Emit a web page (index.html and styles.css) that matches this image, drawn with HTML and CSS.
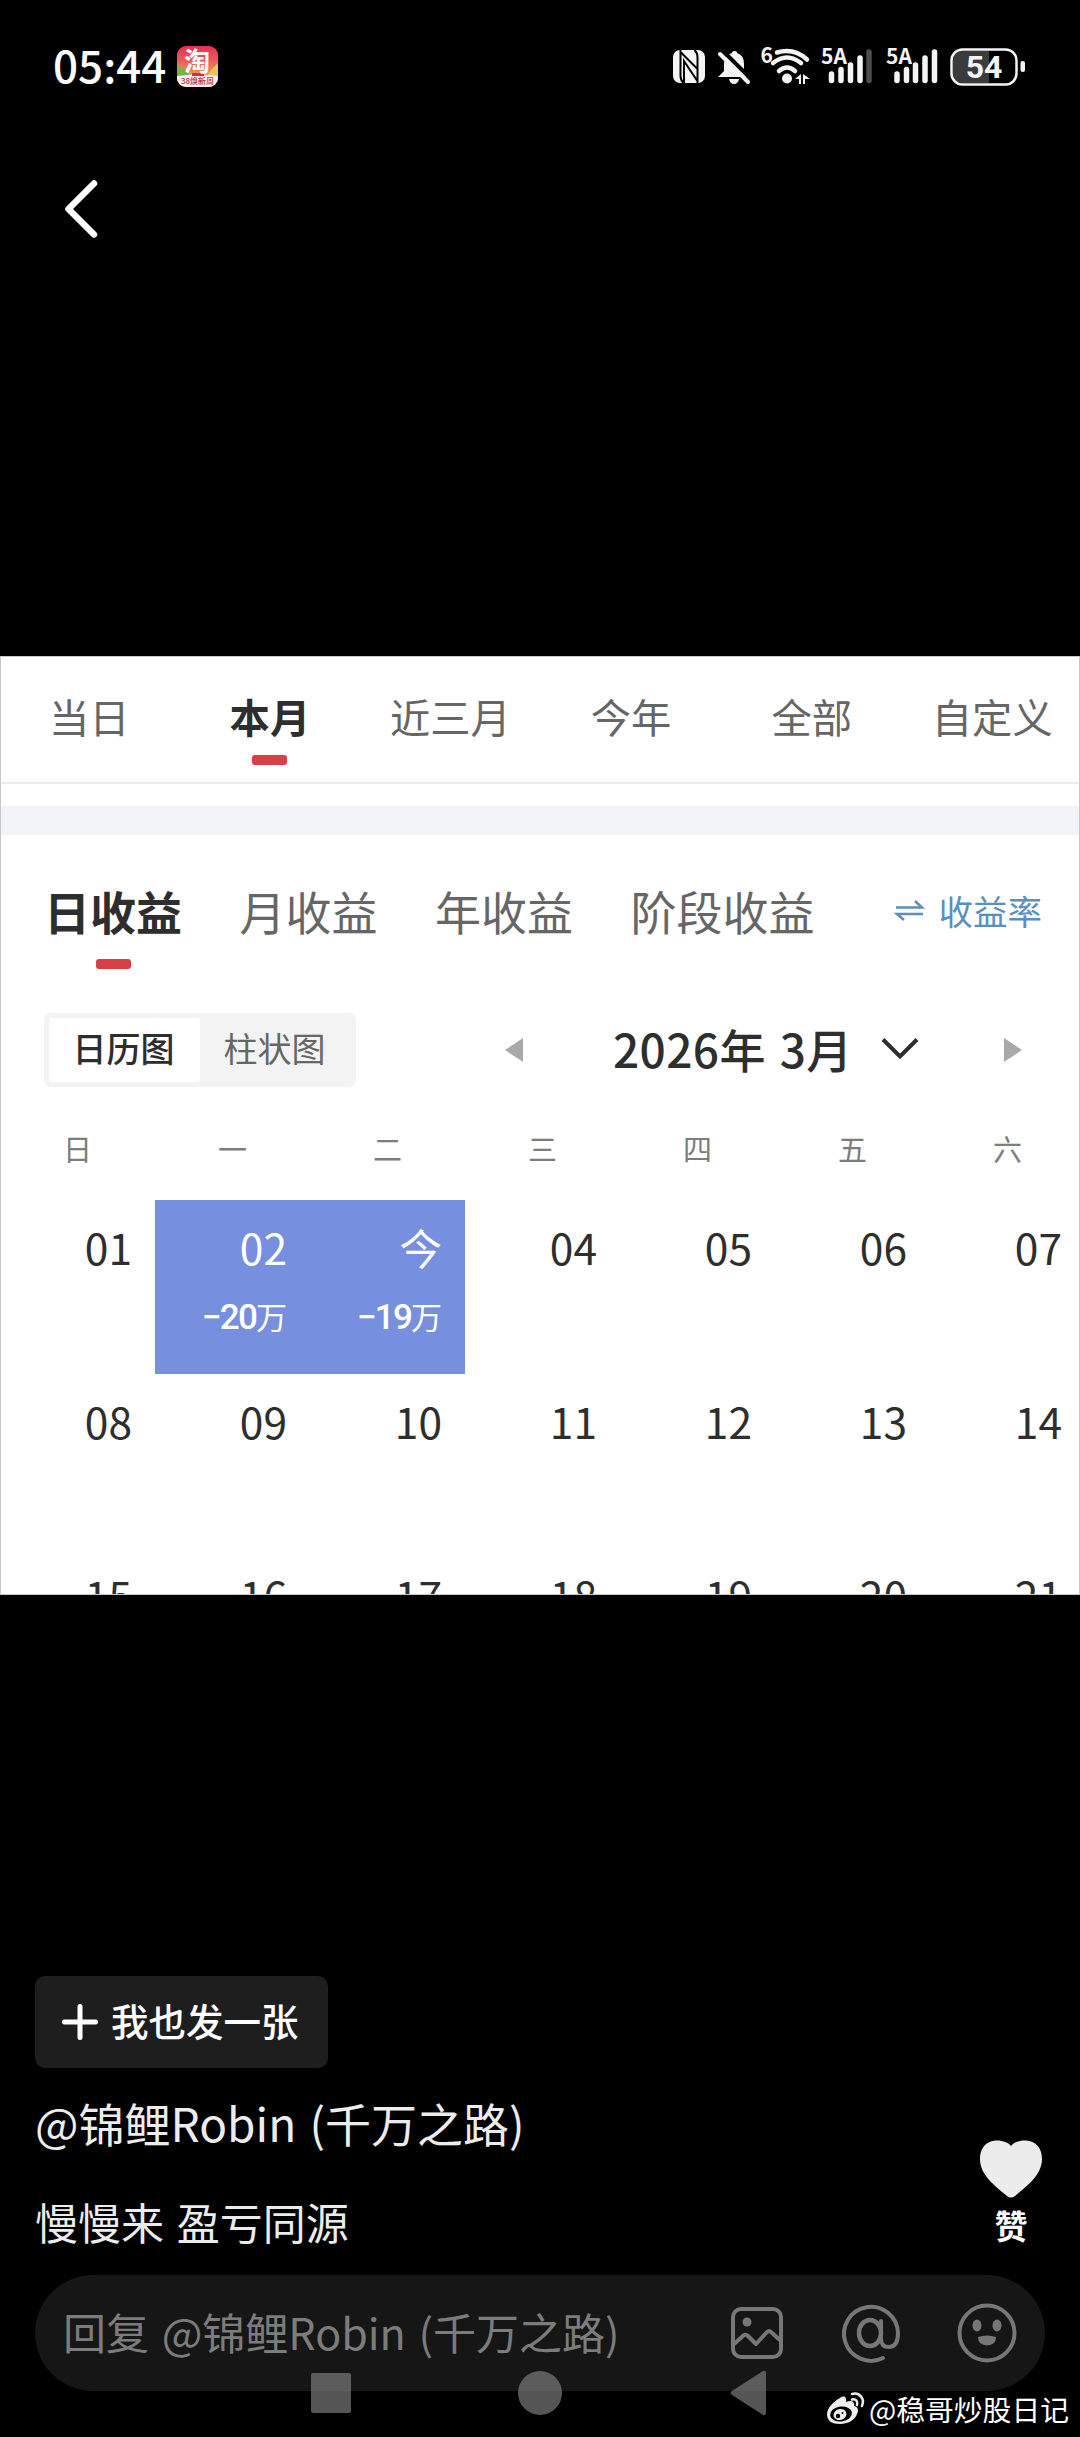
FILE: index.html
```html
<!DOCTYPE html>
<html lang="zh-CN">
<head>
    <meta charset="UTF-8">
    <meta name="viewport" content="width=device-width, initial-scale=1.0">
    <title>图片</title>
    <link rel="stylesheet" href="styles.css">
</head>
<body>
    <div class="viewer">
        <header class="status-bar">
            <span class="clock">05:44</span>
            <svg class="app-icon" width="41" height="41" viewBox="0 0 41 41">
                <defs>
                    <linearGradient id="appBg" x1="0" y1="0" x2="0" y2="1">
                        <stop offset="0" stop-color="#e8304f"/>
                        <stop offset="0.35" stop-color="#ea5a60"/>
                        <stop offset="0.72" stop-color="#e9a24e"/>
                    </linearGradient>
                    <clipPath id="appClip"><rect width="41" height="41" rx="9"/></clipPath>
                </defs>
                <g clip-path="url(#appClip)">
                    <rect width="41" height="41" fill="url(#appBg)"/>
                    <path d="M0 18l5 4 5 2 3 6H0z" fill="#7fae4c"/>
                    <path d="M41 17l-6 6-5 7h11z" fill="#e9c45c"/>
                    <path d="M0 30q20-3 41 0v11H0z" fill="#fbeef0"/>
                    <path d="M15 27h12v3H15z" fill="#cf2f45"/>
                </g>
                <text x="20" y="25" class="app-char">淘</text>
                <text x="20.500" y="38" class="app-note">38焕新周</text>
            </svg>
            <div class="status-icons">
                <svg width="374" height="44" viewBox="0 0 374 44">
                    <!-- nfc -->
                    <rect x="1" y="6" width="32" height="33" rx="7" fill="#f4f4f4"/>
                    <path d="M8.500 6v26q0 4 3 7M25.500 39V13q0-4-3-7M8.500 8L25.500 25M12 39V17l14 21" stroke="#000" stroke-width="2" fill="none"/>
                    <!-- muted bell -->
                    <path d="M46 33h30l-4-6v-7q0-9-7-11v-1q-2-2-5 0v1q-8 2-8 11v7z" fill="#f4f4f4"/>
                    <path d="M57 35h10q-1 5-5 5t-5-5z" fill="#f4f4f4"/>
                    <path d="M51 7l28 28" stroke="#000" stroke-width="4"/>
                    <path d="M48 10l28 28" stroke="#f4f4f4" stroke-width="4" stroke-linecap="round"/>
                    <!-- wifi 6 -->
                    <text x="88.500" y="19" class="net-gen">6</text>
                    <g fill="none" stroke="#f4f4f4" stroke-width="4.500" stroke-linecap="round">
                        <path d="M105 8.500q17-5 30 7"/>
                        <path d="M101 19q14-11 28 0"/>
                        <path d="M107 27q8-7 16 0"/>
                    </g>
                    <circle cx="115" cy="34.500" r="5" fill="#f4f4f4"/>
                    <path d="M129 30v10h-2v-5h-4zM131 40V30l7 5h-5v5z" fill="#f4f4f4"/>
                    <!-- signals -->
                    <text x="149" y="20" class="net-gen">5A</text>
                    <g stroke="#f4f4f4" stroke-width="5.500" stroke-linecap="round">
                        <path d="M159.500 30v6.500M169 25.500v11M178.500 21v15.500M188 14v22.500"/>
                        <path d="M197 8v28.500" stroke="#4c4c4c"/>
                    </g>
                    <text x="214" y="20" class="net-gen">5A</text>
                    <path d="M225 30v6.500M234.500 25.500v11M243.500 21v15.500M253 14v22.500M262.500 8v28.500" stroke="#f4f4f4" stroke-width="5.500" stroke-linecap="round"/>
                    <!-- battery -->
                    <path d="M290 7q-9 0-9 10v12q0 10 9 10h27V7z" fill="#3b3b3b"/>
                    <rect x="279.500" y="5.500" width="65" height="35" rx="11" fill="none" stroke="#f4f4f4" stroke-width="2.500"/>
                    <rect x="348.500" y="17" width="4.500" height="11" rx="2" fill="#f4f4f4"/>
                    <text x="312" y="33.500" class="battery-level">54</text>
                </svg>
            </div>
        </header>

        <div class="top-nav">
            <svg width="36" height="62" viewBox="0 0 36 62">
                <path d="M31 5.500L5.500 31 31 56.500" fill="none" stroke="#fff" stroke-width="6.500" stroke-linecap="round" stroke-linejoin="round"/>
            </svg>
        </div>

        <main class="photo">
            <nav class="range-tabs">
                <span>当日</span>
                <span class="active">本月</span>
                <span>近三月</span>
                <span>今年</span>
                <span>全部</span>
                <span>自定义</span>
            </nav>
            <div class="band"></div>

            <div class="profit-tabs">
                <span class="active">日收益</span>
                <span>月收益</span>
                <span>年收益</span>
                <span>阶段收益</span>
                <a class="rate">
                    <svg width="29" height="24" viewBox="0 0 29 24">
                        <path d="M1 9.500h26L20 3M28 16H2l7 6" fill="none" stroke="#5b8fbd" stroke-width="2.500"/>
                    </svg>
                    收益率
                </a>
            </div>

            <div class="toolbar">
                <div class="toggle">
                    <span class="active">日历图</span>
                    <span>柱状图</span>
                </div>
                <svg class="prev" width="19" height="26" viewBox="0 0 19 26"><path d="M18 1v24L0 13z" fill="#a9a9a9"/></svg>
                <div class="month">2026年 3月</div>
                <svg class="down" width="38" height="24" viewBox="0 0 38 24"><path d="M2 1.500l17 17 17-17" fill="none" stroke="#2e2e2e" stroke-width="4"/></svg>
                <svg class="next" width="19" height="26" viewBox="0 0 19 26"><path d="M1 1v24l18-12z" fill="#a9a9a9"/></svg>
            </div>

            <div class="weekdays">
                <span>日</span><span>一</span><span>二</span><span>三</span><span>四</span><span>五</span><span>六</span>
            </div>

            <div class="days">
                <div class="day">01</div>
                <div class="day loss">02<small><b>−20</b>万</small></div>
                <div class="day loss">今<small><b>−19</b>万</small></div>
                <div class="day">04</div>
                <div class="day">05</div>
                <div class="day">06</div>
                <div class="day">07</div>
                <div class="day">08</div>
                <div class="day">09</div>
                <div class="day">10</div>
                <div class="day">11</div>
                <div class="day">12</div>
                <div class="day">13</div>
                <div class="day">14</div>
                <div class="day">15</div>
                <div class="day">16</div>
                <div class="day">17</div>
                <div class="day">18</div>
                <div class="day">19</div>
                <div class="day">20</div>
                <div class="day">21</div>
            </div>
        </main>

        <section class="post">
            <button class="post-button">
                <svg width="36" height="36" viewBox="0 0 36 36"><path d="M18 2.500v31M2.500 18h31" stroke="#fff" stroke-width="5" stroke-linecap="round"/></svg>
                <span>我也发一张</span>
            </button>
            <div class="post-row">
                <div class="post-text">
                    <p class="author">@锦鲤Robin (千万之路)</p>
                    <p class="caption">慢慢来 盈亏同源</p>
                </div>
                <div class="like">
                    <svg width="62" height="58" viewBox="0 0 62 58">
                        <path d="M31 6C25-2 0-4 0 19c0 16 15 27 27 37q4 3 8 0c12-10 27-21 27-37C62-4 37-2 31 6z" fill="#ececec"/>
                    </svg>
                    <span>赞</span>
                </div>
            </div>
            <div class="reply">
                <span class="placeholder">回复 @锦鲤Robin (千万之路)</span>
                <svg width="54" height="60" viewBox="0 0 54 60">
                    <g fill="none" stroke="#777" stroke-width="4" stroke-linejoin="round">
                        <rect x="2" y="6" width="48" height="48" rx="8"/>
                        <path d="M3 41l10-9q2-1 4 1l8 8 11-12q2-2 4 0l10 9"/>
                    </g>
                    <circle cx="16" cy="19" r="4.500" fill="#777"/>
                </svg>
                <svg width="60" height="60" viewBox="0 0 60 60">
                    <g fill="none" stroke="#777" stroke-width="4" stroke-linecap="round">
                        <path d="M42 55A27 27 0 1 1 57 30q0 14-9 14-8 0-8-8V18"/>
                        <ellipse cx="29" cy="30" rx="11" ry="13" stroke-width="4.500"/>
                    </g>
                </svg>
                <svg width="60" height="60" viewBox="0 0 60 60">
                    <circle cx="30" cy="30" r="27.500" fill="none" stroke="#777" stroke-width="4"/>
                    <ellipse cx="20" cy="22.500" rx="4.500" ry="6" fill="#777"/>
                    <ellipse cx="40" cy="22.500" rx="4.500" ry="6" fill="#777"/>
                    <path d="M21 34q9-3 18 0 0 8-9 8.500-9-.5-9-8.500z" fill="#777"/>
                </svg>
            </div>
        </section>

        <!-- system navigation keys over the reply box -->
        <div class="system-keys">
            <svg width="46" height="46" viewBox="0 0 46 46"><rect x="3" y="3" width="40" height="40" rx="2"/></svg>
            <svg width="46" height="46" viewBox="0 0 46 46"><circle cx="23" cy="23" r="22"/></svg>
            <svg width="46" height="46" viewBox="0 0 46 46"><path d="M6 21L37 1q3-1 3 2v40q0 3-3 2L6 25q-3-2 0-4z"/></svg>
        </div>

        <div class="watermark">
            <svg width="40" height="34" viewBox="0 0 40 34">
                <path d="M15 6c4-3 7-1 6 4 5-2 9-1 8 4 4 1 5 4 3 8-2 6-9 10-17 10C7 32 2 29 2 22 2 16 9 9 15 6z" fill="#eee"/>
                <ellipse cx="16" cy="22" rx="11" ry="7.500" fill="#000" transform="rotate(-8 16 22)"/>
                <ellipse cx="15" cy="22.500" rx="6.500" ry="5.500" fill="#eee" transform="rotate(-15 15 22.500)"/>
                <circle cx="13" cy="24" r="2.200" fill="#000"/>
                <circle cx="17.500" cy="21" r="1" fill="#000"/>
                <path d="M27 2c8-2 13 5 10 12M27 7.500c4-1 6 2 5 5.500" fill="none" stroke="#eee" stroke-width="2.500" stroke-linecap="round"/>
            </svg>
            <span>@稳哥炒股日记</span>
        </div>
    </div>
</body>
</html>
```

FILE: styles.css
```css
* {
    box-sizing: border-box;
}

body {
    margin: 0;
    background: #000;
    color: #fff;
    font-family: "Noto Sans CJK SC", "Noto Sans", sans-serif;
}

p {
    margin: 0;
}

svg {
    display: block;
    flex-shrink: 0;
    overflow: visible;
}

.viewer {
    position: relative;
    width: 1080px;
    height: 2437px;
    overflow: hidden;
    display: flex;
    flex-direction: column;
}

/* status bar */
.status-bar {
    height: 132px;
    padding: 0 34px 0 53px;
    display: flex;
    align-items: center;
}

.clock {
    width: 124px;
    padding-bottom: 5px;
    font-size: 44px;
    font-weight: 500;
    line-height: 60px;
    white-space: nowrap;
}

.status-icons {
    margin-left: auto;
    width: 374px;
}

.app-char {
    font-size: 26px;
    font-weight: 700;
    fill: #fff;
    text-anchor: middle;
}

.app-note {
    font-size: 8px;
    font-weight: 500;
    fill: #c0304c;
    text-anchor: middle;
}

.net-gen {
    font-size: 21px;
    font-weight: 700;
    fill: #f4f4f4;
}

.battery-level {
    font-family: Roboto, sans-serif;
    font-size: 32px;
    font-weight: 700;
    fill: #f4f4f4;
    text-anchor: middle;
}

.top-nav {
    height: 524px;
    padding: 46px 0 0 63px;
}

/* shared picture */
.photo {
    height: 939px;
    overflow: hidden;
    background: #fff;
    border: 1px solid #c8c8c8;
    color: #666;
}

.range-tabs {
    height: 127px;
    border-bottom: 2px solid #ececee;
    display: grid;
    grid-template-columns: repeat(6, 180.600px);
    text-align: center;
    font-size: 40.300px;
    line-height: 60px;
    padding-top: 29px;
    margin-left: -2px;
    white-space: nowrap;
}

.range-tabs .active,
.profit-tabs .active {
    color: #2e2e2e;
    font-weight: 700;
}

.range-tabs .active::after,
.profit-tabs .active::after {
    content: "";
    display: block;
    width: 35px;
    height: 10px;
    margin: 9px auto 0;
    border-radius: 3px;
    background: #d84045;
}

.band {
    height: 29px;
    margin-top: 22px;
    background: #f2f3f7;
}

.profit-tabs {
    height: 178px;
    padding: 45px 37px 0 43px;
    display: flex;
    align-items: flex-start;
    gap: 57.500px;
    font-size: 46px;
    line-height: 60px;
    white-space: nowrap;
}

.profit-tabs .active::after {
    margin-top: 19px;
}

.rate {
    margin-left: auto;
    display: flex;
    align-items: center;
    gap: 15px;
    color: #5b8fbd;
    font-size: 34.500px;
}

.toolbar {
    height: 74px;
    padding-left: 43px;
    display: flex;
    align-items: center;
}

.toggle {
    width: 312px;
    height: 74px;
    padding: 5px;
    border-radius: 7px;
    background: #f3f3f3;
    display: flex;
    font-size: 34px;
    line-height: 59px;
    text-align: center;
}

.toggle span {
    width: 151px;
    height: 64px;
    padding-right: 2px;
}

.toggle .active {
    border-radius: 4px;
    background: #fff;
    color: #2e2e2e;
    font-weight: 500;
}

.prev {
    margin-left: 149px;
}

.month {
    width: 240px;
    margin-left: 89px;
    padding-bottom: 5px;
    color: #2e2e2e;
    font-size: 46px;
    font-weight: 500;
    line-height: 64px;
    letter-spacing: 0.400px;
    word-spacing: 3px;
    white-space: nowrap;
}

.down {
    margin-left: 28px;
}

.next {
    margin-left: 84px;
}

.weekdays {
    height: 113px;
    margin-left: -1px;
    padding-top: 40px;
    display: grid;
    grid-template-columns: repeat(7, 155px);
    text-align: center;
    font-size: 29px;
    line-height: 42px;
    color: #7d7d7d;
}

.days {
    margin-left: -1px;
    display: grid;
    grid-template-columns: repeat(7, 155px);
    grid-auto-rows: 174px;
    color: #2e2e2e;
}

.day {
    padding: 17px 23px 0 0;
    font-size: 42.500px;
    line-height: 60px;
    text-align: right;
}

.loss {
    background: #7690df;
    color: #fff;
}

.day small {
    display: block;
    font-size: 31px;
    line-height: 78px;
}

.day b {
    font-family: Roboto, sans-serif;
    font-size: 35px;
    font-weight: 500;
    letter-spacing: -1.800px;
}

/* post info */
.post {
    padding: 381px 35px 0;
}

.post-button {
    width: 293px;
    height: 92px;
    padding: 0 0 0 27px;
    border: none;
    border-radius: 10px;
    background: #1e1e1e;
    color: #fff;
    display: flex;
    align-items: center;
    gap: 13px;
    font-family: inherit;
    font-size: 37.500px;
    font-weight: 500;
}

.post-button span {
    padding-bottom: 5px;
}

.post-row {
    height: 207px;
    display: flex;
    justify-content: space-between;
    color: #ececec;
}

.author {
    margin-top: 22px;
    font-size: 46px;
    line-height: 64px;
    word-spacing: 3px;
}

.caption {
    margin-top: 35px;
    font-size: 43px;
    line-height: 64px;
    word-spacing: 3px;
}

.like {
    width: 68px;
    padding-top: 72px;
    display: flex;
    flex-direction: column;
    align-items: center;
    color: #fff;
    font-size: 33px;
    font-weight: 700;
    line-height: 54px;
}

.reply {
    height: 116px;
    padding: 0 28px 0 28px;
    border-radius: 58px;
    background: #161616;
    display: flex;
    align-items: center;
    gap: 56px;
}

.placeholder {
    margin-right: auto;
    padding-bottom: 5px;
    color: #7c7c7c;
    font-size: 43px;
    word-spacing: 3px;
    white-space: nowrap;
}

.system-keys {
    position: absolute;
    left: 308px;
    right: 308px;
    bottom: 21px;
    display: flex;
    justify-content: space-between;
    fill: rgba(125, 125, 125, 0.68);
}

.watermark {
    position: absolute;
    right: 11px;
    bottom: 7px;
    display: flex;
    align-items: center;
    gap: 4px;
    font-size: 28.800px;
    line-height: 42px;
    white-space: nowrap;
}
```
